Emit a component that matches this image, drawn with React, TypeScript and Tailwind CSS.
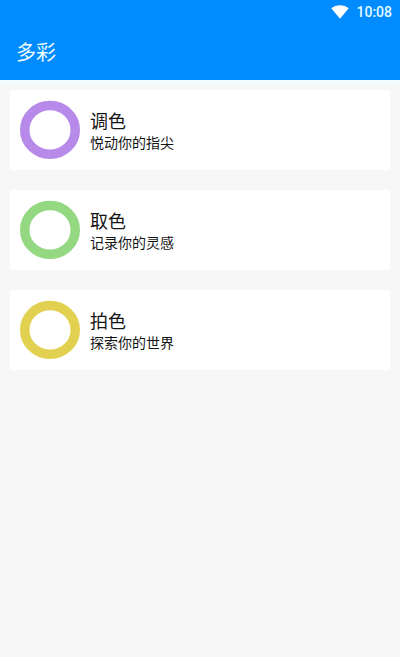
const items = [
  { title: '调色', text: '悦动你的指尖', ring: '#b78aea' },
  { title: '取色', text: '记录你的灵感', ring: '#94d881' },
  { title: '拍色', text: '探索你的世界', ring: '#e2d050' },
];

export default function App() {
  return (
    <div className="flex h-[661px] w-[400px] flex-col overflow-hidden border-b-4 border-white bg-[#f7f7f7] font-['Roboto','Noto_Sans_CJK_SC',sans-serif] text-[#141414]">
      <header className="h-20 shrink-0 bg-[#008cff] text-[#f0fcff]">
        <div className="flex h-6 items-center justify-end gap-[7px] pr-2">
          <svg className="mb-px text-white" width="18" height="14" viewBox="0 0 18 14" fill="currentColor" aria-hidden="true">
            <path d="M0.3 3.2C5.2-0.8 12.8-0.8 17.7 3.2L9 13.8Z" />
          </svg>
          <span className="text-sm font-medium leading-6 text-[#e0faff]">10:08</span>
        </div>
        <h1 className="pl-4 text-xl leading-[58px]">多彩</h1>
      </header>
      <main className="flex flex-1 flex-col gap-5 border-t-4 border-[#f0fcfd] px-[10px] pt-[6px]">
        {items.map((item) => (
          <section key={item.title} className="flex h-20 shrink-0 items-center gap-[10px] rounded-[1px] bg-white px-[10px]">
            <svg width="60" height="60" viewBox="0 0 60 60" aria-hidden="true">
              <ellipse cx="30" cy="29.9" rx="25.25" ry="24.4" fill="none" stroke={item.ring} strokeWidth="9.5" />
            </svg>
            <div className="pt-[5px]">
              <h2 className="text-lg leading-[22px]">{item.title}</h2>
              <p className="text-sm leading-[21px]">{item.text}</p>
            </div>
          </section>
        ))}
      </main>
    </div>
  );
}
